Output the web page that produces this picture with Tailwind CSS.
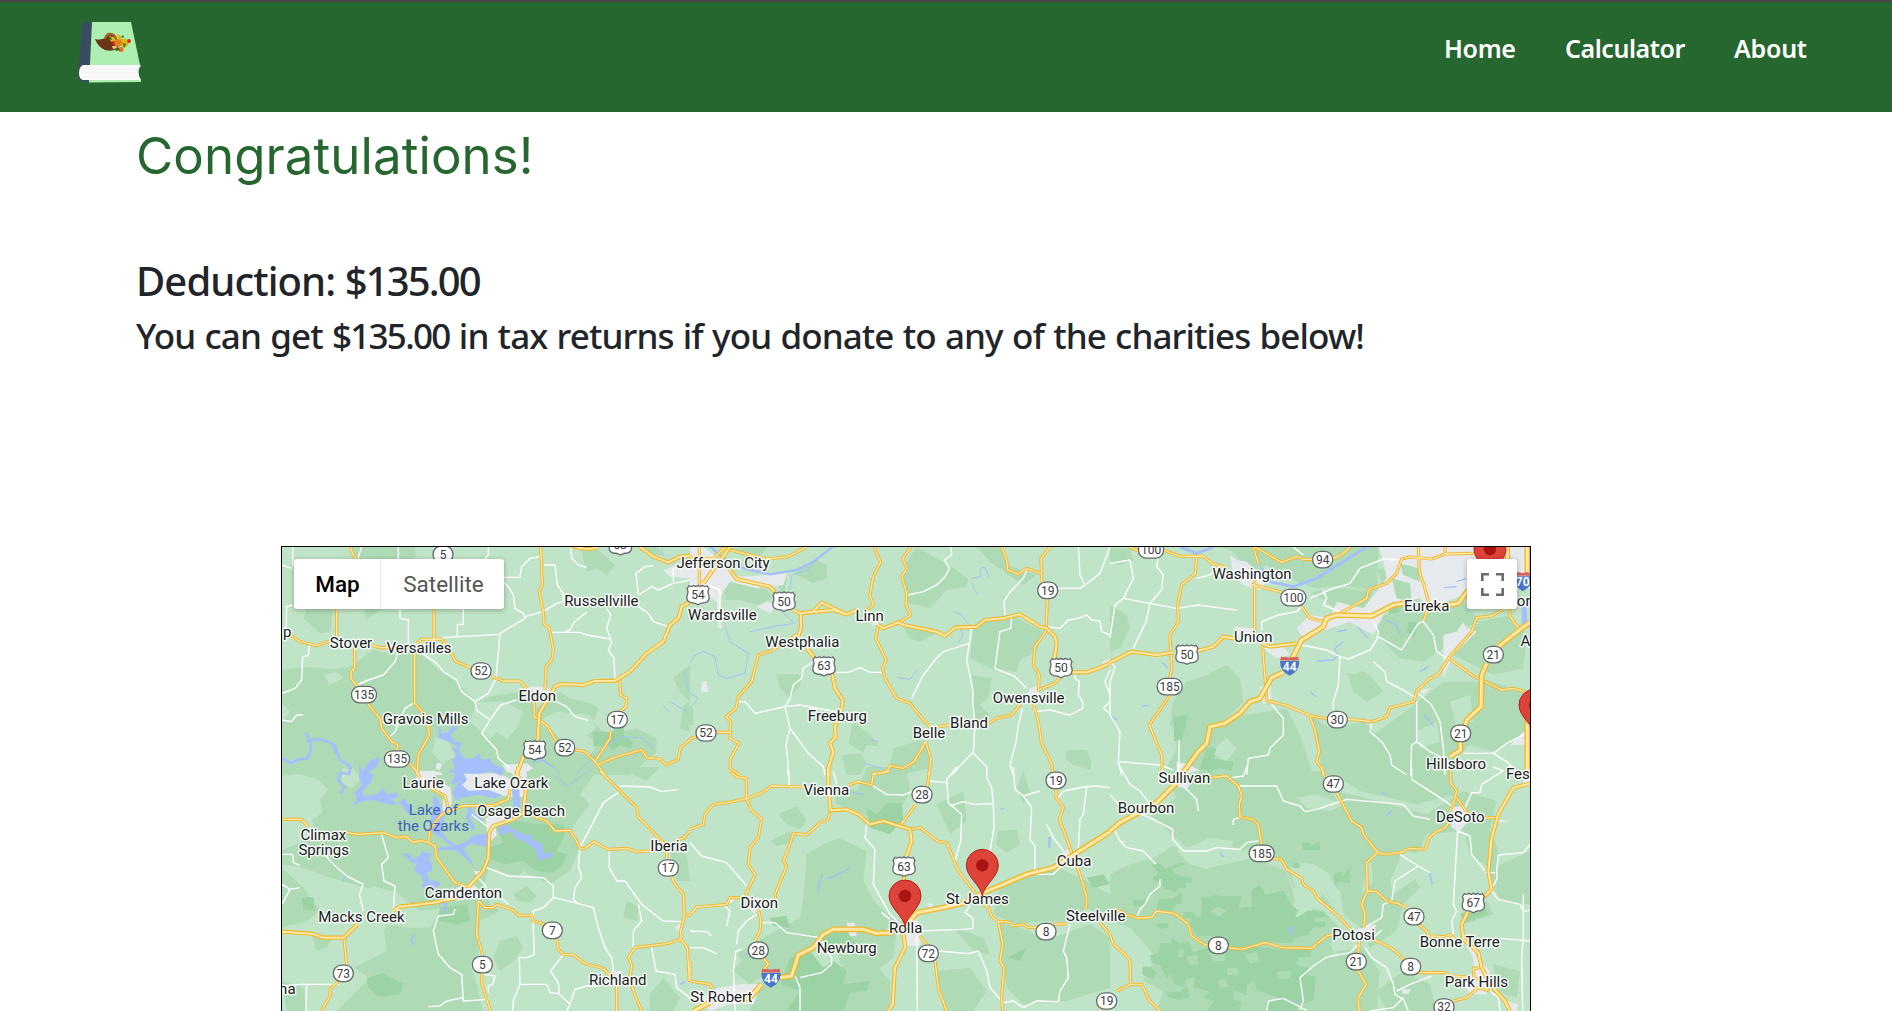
<!DOCTYPE html>
<html lang="en">
<head>
<meta charset="utf-8">
<title>Deduction results</title>
<script src="https://cdn.jsdelivr.net/npm/@tailwindcss/browser@4"></script>
</head>
<body class="h-[1011px] overflow-hidden bg-white font-['Noto_Sans',sans-serif] text-[#212529]">
<header class="flex h-[112px] items-start justify-between border-t-2 border-[#4a4349] bg-[#25672f] pl-[76px] pr-[84px]">
  <svg class="mt-[18px] h-[65px] w-[67px]" viewBox="76 20 67 65">
    <path d="M86 22h6l-2 44v14l-2 2h-5q-5-1-5-9l2-21 2-25q1-5 4-5z" fill="#3a4c64"/>
    <path d="M92 22h39l9 43H90z" fill="#adefb0"/><path d="M89 80h52v2l-52 .5z" fill="#adefb0"/>
    <path d="M83 65h58q-5 7 0 15H83q-4-1-4-7t4-8z" fill="#fbfbfd"/>
    <path d="M82 69h56M81 73h57M82 77h57" stroke="#e9ebee" stroke-width=".7"/>
    <path d="M95 39q7 2 12-3 4-3 8 0l4 7-2 6q-6 3-12 1-7-3-10-11z" fill="#6c3518"/>
    <path d="M105 39q1-6 7-5 5 2 4 8" fill="none" stroke="#a4632c" stroke-width="2"/>
    <path d="M109 36l5 1 2 4-5 1zM117 34l3 1 2 4 5 0 2 5-4 4-3-1-4-6z" fill="#dfb817"/>
    <circle cx="118" cy="43" r="3.800" fill="#e87a24"/><circle cx="121" cy="49.500" r="2.500" fill="#ef6c24"/><circle cx="129" cy="41" r="1.900" fill="#d92323"/><circle cx="113" cy="43" r="1.500" fill="#c9251d"/>
    <path d="M114 48l4-1 2 3-4 1zM108 38l3-1 1 3zM121 37l2-2 1 3zM123 43l3 1-2 4z" fill="#2d6b26"/><path d="M112 46l4 0 1 2-4 1z" fill="#f0c77a"/>
  </svg>
  <nav class="flex pt-[29px] text-[25px] leading-[34px] font-semibold text-white">
    <a class="w-[121px] -ml-px tracking-[-0.35px]">Home</a><a class="w-[169px] tracking-[-0.45px]">Calculator</a><a class="w-[74px] tracking-[-0.25px]">About</a>
  </nav>
</header>
<main class="pl-[136px]">
  <h1 class="h-[144px] pt-[14px] font-['Inter'] text-[51px] leading-[60px] font-normal tracking-[0.08px] text-[#25672f]">Congratulations!</h1>
  <h2 class="h-[58px] text-[40px] leading-[50px] font-medium tracking-[-0.9px] whitespace-nowrap">Deduction: <span class="tracking-[-1.9px]">$135.00</span></h2>
  <h3 class="h-[232px] text-[35px] leading-[44px] font-medium tracking-[-0.9px] [word-spacing:1px] whitespace-nowrap">You can get <span class="tracking-[-1.7px]">$135.00</span> in tax returns if you donate to any of the charities below!</h3>
  <section class="relative ml-[145px] h-[470px] w-[1250px] border border-black bg-[#c0e4c7]">
    <svg class="block h-[464px] w-[1248px]" viewBox="282 547 1248 464">
      <defs>
        <g id="minor">
          <g transform="translate(270 535) scale(.333333)"><path d="M240 36L250 60 262 75M200 220V310M60 300L90 320 140 332 180 318M305 328L325 338H380M440 325L455 313 515 312 545 355 555 378 605 400M665 425L700 438H750L770 460M492 220V312M434 350V505L470 545 478 600 445 660 442 720M254 335V400L243 410V430L262 455 300 515 330 550 335 580 365 620 383 630 380 650M415 680L445 715M812 36L817 150 808 170 820 230 822 268 838 280 850 345 845 375 828 395 825 465M793 500V545L830 570 860 620 915 645 945 650 975 680 1020 610 1022 590M975 680L1005 720M985 688L1040 665 1115 645 1130 668 1170 672 1190 690 1225 672 1230 640 1260 615M1048 430L1052 480 1070 490 1068 515 1050 530"/></g>
          <g transform="translate(690 535) scale(.333333)"><path d="M28 36V150M0 66L70 72 100 40 230 72 295 65 350 36M552 36L572 80 548 130 540 180 550 210 530 225M663 36L638 70 650 100 636 125 650 175 648 210 662 240 640 255 625 262M565 270L557 310 588 375 578 400 585 430 620 490 660 505 705 560 720 575M745 575L780 570M895 567L920 550 965 540 990 508M935 36L950 75 953 105 985 118 1010 100 1055 117M1080 36L1053 70 1056 145M1072 190L1068 290 1035 335 1030 390 1048 420 1045 465 1095 445 1112 425M1028 500L1045 560 1055 625 1087 690V720M320 300L250 345 205 360 185 440 145 485 138 520 108 545 122 560 120 610 147 625 122 670 120 700 150 720M0 612L20 605M75 592H120M707 620L690 650 672 680 640 700 600 692 590 712 548 716M707 620L722 670 718 720"/></g>
          <g transform="translate(1110 535) scale(.333333)"><path d="M60 36L90 50M160 45L210 64 280 63 305 85 350 98M260 63L256 115 215 150 203 210 205 260 180 300 185 400 180 430M180 480L118 570 155 660 157 720M435 36L515 82 560 65 580 73 610 73M665 73L700 55 720 36M430 36L445 85M434 130V320M425 148L515 172M575 215L600 250 650 262M690 235L770 190 775 165 830 145 860 115 875 72 900 66 965 72 1005 57 1095 55M1005 57V36M925 36L928 110 942 150 958 210 940 258M457 330L470 490M465 495L530 512 600 542 655 552M600 545L615 585 628 650 620 680 638 705V720M712 552L785 560 830 545 840 518 912 500 920 468 960 430 985 418 1015 370 1085 290 1100 248 1145 243 1180 222M1015 370L1085 420 1175 465 1210 460 1260 475M1200 220V245L1228 282M1228 282L1260 270"/></g>
          <g transform="translate(270 771) scale(.333333)"><path d="M430 -12L450 20M480 50L525 75 535 110M36 145H95L115 168M230 185L265 190 340 185 380 200 410 197 430 215 450 208 475 215 495 225 500 260 555 335 595 348M475 215L480 175 515 130 575 105 670 103 715 85 720 55M790 135L830 150 855 180 900 178 920 210 930 232 945 233 970 212 1015 235 1070 232 1100 242 1140 240M1225 205L1240 202 1260 180M990 0L1045 55 1100 110 1105 138 1165 200 1190 225V262M1205 318L1215 340 1240 370 1243 435 1232 480 1233 505 1190 518 1095 530 1075 560 1085 580 1080 620 1090 660 1115 720M1243 435L1260 432M1233 505L1252 530 1258 630M625 390L620 490 638 550M635 608V640L662 720M625 390L645 410H670L680 400 730 418 745 433H785L790 450 825 460M860 500L865 535 880 550 910 552 950 580 1000 592 1025 620M1040 645V720M222 500L230 580M205 630L180 655V675L155 720"/></g>
          <g transform="translate(690 771) scale(.333333)"><path d="M120 0L140 18 168 22 170 85 185 118 215 145 205 200 180 230 175 280 195 310 168 370 172 385M0 175L40 160 45 130 70 100 110 95 170 83 215 65 245 45 345 48M475 42L505 32 545 42 550 10 598 0M420 120L415 145 390 155 350 192 310 187 300 220 280 270 290 285 255 370 258 385M0 432L20 408 110 400 120 380H150M205 415L213 450 210 480 195 510M220 560L235 580 220 595M718 0L712 48M678 100L632 162M660 175L690 170 745 212 770 215 805 300 855 365M880 400L895 410 905 435 925 452 955 452 970 465 1000 460 1015 470 1045 468M1090 460L1130 458M1090 0V10M1098 55V80L1120 110 1108 145 1140 230 1150 260 1170 310 1190 380 1188 415M925 452L938 520 930 570 942 590 935 680 938 720M690 495L715 525M735 570L745 650 770 720M1230 455L1260 490M1220 710L1260 690M0 570V630L60 640 70 655"/></g>
          <g transform="translate(1110 771) scale(.333333)"><path d="M638 -12V5L645 18M680 65L725 150 755 170 760 190 800 240 805 243 770 275 772 360 755 400 765 430 762 470M805 243L820 250 870 245 900 232 945 235 957 200 975 185 1005 170 1020 150M772 360L800 362 830 390 865 398 890 410M925 460L950 480 955 495 1005 497 1020 490 1040 510M300 20L350 15 385 45 395 75 388 100 390 138 430 145 445 160 455 220M490 262L515 266 530 295 575 322 580 340 610 360 620 380 690 440 720 475M20 415L50 432 90 442 125 438 140 420 195 428 235 460 245 495 285 522 300 522M355 530L395 535 465 515 520 530 605 532 650 495 675 490M748 510L745 550M742 595L768 640 745 680 747 720M790 505L850 535 885 570M925 605H1005L1020 615 1080 618M0 490L10 520 45 550 60 570 62 640 20 660M60 640L95 640 120 690 150 720M1022 -12V35L1040 60 1030 100 1020 120M1040 80L1075 130M1125 140H1163M1030 690L1070 680 1105 650 1140 660M1115 590L1090 592 1092 620 1115 630"/></g>
        </g>
        <g id="major">
          <g transform="translate(270 535) scale(.333333)"><path d="M740 720L760 665 800 640M803 620L808 535 855 455 875 447 940 450 975 438 1035 437 1080 410 1130 355 1180 320 1200 270 1225 250 1235 215 1262 200M900 30Q950 50 985 36M1110 36L1150 65 1195 82 1230 65 1262 62"/></g>
          <g transform="translate(690 535) scale(.333333)"><path d="M120 36L40 145M120 105L140 132 240 155 255 172M310 225L330 235 370 230 395 203 470 238 500 225M330 235L430 225 470 238M332 235L333 275 325 305M350 340L375 370M425 410L435 460 458 495 455 520 435 575 437 605 420 625 430 650 415 700V720M565 270L580 280 625 262 640 270 740 290 765 303 795 278 860 275 885 255 940 250 990 238 1050 275 1070 280 1095 305 1100 330 1093 370M1145 412H1190L1220 402 1260 385"/></g>
          <g transform="translate(1110 535) scale(.333333)"><path d="M0 382L65 350 140 360 190 352M260 348L310 335 340 305 380 312M455 325L480 335 560 325"/></g>
          <g transform="translate(270 771) scale(.333333)"><path d="M36 482L125 488 160 500 222 500 262 460M370 420L390 407 490 395 560 380M595 348L640 300 655 260 658 185 670 165 730 145 760 125 768 50M768 50L740 10 745 -12"/></g>
          <g transform="translate(690 771) scale(.333333)"><path d="M415 -12V50L422 118 470 115 505 130 540 160 580 150 660 175 665 210 650 255M642 310V335M640 480L645 530 615 590 608 700 595 720"/></g>
          <g transform="translate(1110 771) scale(.333333)"><path d="M1260 38L1210 50 1165 130 1145 200 1135 300 1145 355 1120 380M1075 420L1055 460 1060 505 1105 545 1115 590 1140 640 1185 690 1200 720"/></g>
        </g>
        <g id="inter">
          <g transform="translate(1110 535) scale(.333333)"><path d="M1075 165L1045 205 1020 210 985 210M885 205L850 210 785 243 680 240 650 250 640 275 575 315 545 375M520 412L485 428 450 490 420 500 390 535 345 565 300 575 290 625 265 650 225 705 195 745M1260 262L1228 285 1165 335M1130 385L1115 420 1113 515 1070 555 1065 575M1050 615L1052 645 1020 665M1252 470V720M1252 36V120M1192 36V75"/></g>
          <g transform="translate(690 771) scale(.333333)"><path d="M1260 182L1145 255 1090 290 1040 302 1010 310 940 340 880 365 825 395 750 412 680 425 655 455 600 485 560 487 520 475 430 475 400 490 370 530 325 552 305 615 270 620M215 640L180 680 150 690M60 695L10 720"/></g>
          <g transform="translate(1110 771) scale(.333333)"><path d="M0 180L30 155 140 95 200 35"/></g>
        </g>
      </defs>
      <!-- woodland -->
      <g fill="#aedbb5">
        <g transform="translate(270 535) scale(.333333)"><path d="M36 405Q100 390 180 402L240 395 310 345 380 360 440 350 480 380 500 400 560 440 620 500 660 485 780 465 800 520 870 470 900 490 960 505 985 520 970 560 1010 600 1100 580 1160 610 1160 650 1080 720H36zM240 36H430L440 60 400 95 330 80H250zM110 220H190L180 290 150 295 100 250zM280 220L335 222 290 255zM935 50L985 45 1035 90 1010 120 980 100 950 110zM1210 430L1260 390V500L1230 470zM1240 510L1260 500V590L1230 580zM1130 0L1180 60 1140 60 1110 40z"/></g>
        <g transform="translate(690 535) scale(.333333)"><path d="M380 75L410 90 412 130 370 145 310 115zM100 150L140 130 230 165 250 190 200 210 150 195H105zM680 36L760 80 835 130 830 155 770 165 720 220 655 205 640 140 650 80zM860 36H935L950 90 1040 120 1000 150 900 80zM880 250L960 240 1060 290 1040 350 990 375 980 410 900 400 840 370 850 280zM258 418L340 418 330 450 300 490 270 460zM845 420L905 430 895 490 870 510 900 540 860 570 850 540zM490 560L540 600 570 635 530 630 520 655 475 625zM455 660L510 655 530 680 510 720H470zM610 640L690 615 720 640 720 700 650 715 600 690zM1130 645L1190 645 1205 680 1200 705 1150 690 1125 670zM640 275L740 295 690 320 660 310zM120 40L235 36 200 70 150 60zM260 145L290 135 280 180zM0 520H10V570H0z"/></g>
        <g transform="translate(1110 535) scale(.333333)"><path d="M330 36H805L800 170 700 150 620 160 560 140 470 90 420 120 370 50zM600 170L700 160 790 170 760 230 690 230 650 200zM190 500L230 440 290 420 350 390 390 430 400 500 340 560 290 600 230 640 180 570zM0 210L50 240 60 280 30 340 0 350zM280 600L400 540 470 530 530 520 570 600 610 720H160L200 640 190 560zM600 540L660 580 760 560 800 600 830 720H640zM640 180L700 170 700 215zM700 380L780 420 820 470 770 500 730 470zM800 100L900 120 930 180 1000 210 1060 200 1110 260 1050 280 1000 340 940 380 870 370 800 300 790 240 850 240zM900 520L1000 440 1100 440 1240 470 1250 600 1150 650 1080 630 1000 700 920 720H800L790 600zM1110 260L1200 240 1250 300 1240 400 1150 420 1030 360zM1115 430L1260 480V600L1120 560zM0 40H60L70 75 30 90 0 80z"/></g>
        <g transform="translate(270 771) scale(.333333)"><path d="M36 0H980L930 70 960 100 920 150 900 180 930 230 900 300 840 340 760 300 740 320 660 290 640 340 660 400 690 420 630 450 625 560 600 580 620 640 640 720H200L300 620 250 590 350 540 340 470 380 400 290 350 180 320 100 290 36 280zM36 290L100 350 150 420 110 450 36 470zM120 480L190 500 170 530 140 540zM730 370L770 345 800 375 780 395 740 390zM690 510L740 495 760 530 730 570 690 600 670 560zM1070 390L1110 410 1100 450 1060 440zM1140 670L1180 620 1230 680 1210 720H1140zM1200 240L1250 250 1260 330 1220 330zM36 630L100 650 110 720H50zM1080 -12H1170L1130 30 1090 10z"/></g>
        <g transform="translate(690 771) scale(.333333)"><path d="M265 130L320 105 350 150 330 175 290 160zM240 210L300 180 310 215 260 225zM530 -12H650L660 60 640 100 560 130 520 120 500 60zM430 50L530 60 560 150 500 120 440 100zM350 250L400 220 450 200 530 240 520 330 560 400 620 450 580 480 420 480 400 530 320 560 290 640 180 600 140 550 220 500 330 440 340 380zM740 100L820 60 830 150 780 190zM925 180L980 175 990 220 950 245 920 220zM930 350L1040 305 1110 290 1170 320 1260 370V440L1190 410 1130 450 1060 450 980 460 910 430zM920 450L1020 480 1130 600 1130 690 1000 700 950 650zM980 480L1090 500 1200 460 1260 500V650L1130 690 1050 640zM200 640L310 600 360 640 440 590 540 560 600 630 600 720H180zM160 560L210 540 240 600 180 640 130 600zM1000 0L1020 60 1000 100 980 50zM740 600L840 590 890 660 850 720H760zM790 470L880 500 900 550 850 540zM430 460L620 480 610 560 560 600 450 580z"/></g>
        <g transform="translate(1110 771) scale(.333333)"><path d="M160 0H640L680 90 760 160 800 240 770 290 740 440 660 410 600 360 550 350 530 290 480 240 430 230 400 240 330 210 230 230 120 130 200 80zM0 310L60 280 130 260 190 225 300 290 430 260 530 300 560 400 640 420 690 470 660 520 680 560 680 720H140L160 660 100 630 140 560 60 470 0 450zM680 60L800 90 950 130 1060 60 1160 90 1140 180 1170 250 1150 300 1080 250 1060 180 950 190 900 300 930 350 880 400 860 480 780 530 750 470 700 430 790 330 780 260zM680 540L760 530 810 600 800 720H680zM1050 430L1130 390 1150 430 1060 460zM1130 300L1260 240V400L1170 390zM800 660L880 600 960 640 980 720H830zM640 -12H1020L1040 70 920 100 750 60zM1150 580L1230 600 1220 680 1160 660z"/></g>
      </g>
      <!-- clearings -->
      <g fill="#c0e4c7">
        <g transform="translate(270 535) scale(.333333)"><path d="M620 500L700 500 760 530 740 580 710 612 680 590 660 612 600 560zM800 560L860 530 960 540 980 580 950 600 980 630 960 660 900 650 860 600zM160 420L200 410 220 430 180 450zM36 500L60 530 36 560z"/></g>
        <g transform="translate(1110 535) scale(.333333)"><path d="M300 650L350 610 380 640 350 680zM1020 500L1080 480 1090 560 1040 570zM920 590L980 560 990 620 930 640zM640 300L760 320 790 370 740 420 650 400 620 350z"/></g>
        <g transform="translate(282 700) scale(.333333)"><path d="M0 228L50 222 110 240 138 270 115 300 120 340 90 360 100 400 50 430 0 450zM180 205L218 208 235 240 210 265 180 250zM460 110L500 125 520 170 480 190 450 160z"/></g>
        <g transform="translate(270 771) scale(.333333)"><path d="M270 370L310 345 380 365 450 420 530 410 480 460 420 470 350 460 310 560 270 560 250 480zM410 470L470 430 500 440 480 470z"/></g>
        <g transform="translate(1110 771) scale(.333333)"><path d="M200 240L260 220 300 200 370 210 360 240 330 270 290 295 240 280zM560 80L620 70 700 100 660 120 590 110zM540 290L570 275 610 280 660 310 670 340 690 360 700 430 660 400 640 370 610 400 600 440 560 445 545 420 560 370zM880 240L950 250 920 320 850 370 840 330zM1060 600L1080 580 1090 620z"/></g>
      </g>
      <!-- national forest -->
      <g fill="#9bd3a5">
        <g transform="translate(270 535) scale(.333333)"><path d="M970 590H1030V560H1065L1060 600 1090 620 1080 640 1050 630 1030 645 1010 630 970 635z"/></g>
        <g transform="translate(270 771) scale(.333333)"><path d="M680 170L740 150 800 160 880 160 885 190 860 240 890 250 880 280 850 305 800 300 760 270 700 280 650 260 660 230 700 215zM510 410L590 400 600 450 560 460 500 450zM95 380L130 378 135 420 100 415zM290 620L340 605 400 640 390 670 330 678 295 650z"/></g>
        <g transform="translate(690 771) scale(.333333)"><path d="M530 110L560 130 590 95H635L640 145 600 190 540 170zM400 480L470 480 500 520 440 540 390 520zM240 440L290 435 300 470 250 465zM300 560L360 540 400 590 430 570 470 600 460 640 540 630 530 660 480 665 460 720H290L330 660 270 640zM950 560L1010 530 990 570zM1190 320L1240 310 1260 340 1210 350z"/></g>
        <g transform="translate(1110 535) scale(.333333)"><path d="M192 545L235 540 215 618H192zM290 640H320L310 670 370 680 365 708 330 700 300 710 270 700zM840 150L880 160 905 150 905 200 850 190 870 230 835 240 845 190zM895 260H925L915 310 890 290z"/></g>
        <g transform="translate(1110 771) scale(.333333)"><path d="M575 215H600V225L630 210V238H580zM672 310L700 300 690 325 720 290V335L690 330 675 340zM550 277L568 275V290H550zM1050 430L1120 395 1135 430 1065 455z"/></g>
        <g transform="translate(1110 840) scale(.333333)">
          <path d="M126 75L150 70 165 85 210 68 230 72 185 88 195 102 245 115 248 125 228 130V145H205L195 160 180 150 160 148 155 130 125 118 145 100zM70 180H110V198H70zM145 178L190 175 215 155V190L195 195 190 212 140 210zM275 175L320 165 340 168H395L385 205 425 200V150L445 135 460 148 465 165 520 152 530 168 545 195 565 210 555 235 595 212 640 215 650 230 615 235V245H645V260L610 262 595 285 560 290 545 310 460 305 430 315 390 325 350 320 350 290 290 288 262 290 240 255 245 235H220V215H245L262 235 275 225zM140 250H175V262L155 268 140 260z"/>
          <path d="M120 345L145 340 150 310H185V290L210 312 235 305 250 335 285 325 355 325 390 330 440 320 530 330 575 325 605 330 600 350 565 352 560 375 600 385 590 405 618 410 612 480 570 495 555 513H465L470 480 510 475 440 450 430 420 410 440V465L370 450 372 480 395 485 390 513H290L310 485 280 470 300 455 250 440 255 410 225 420V440L195 435 180 400 170 415 150 375 125 368zM98 380H125L140 400 130 418 98 405zM170 455H210L230 440 240 470 205 480 172 470z"/>
          <path fill="#aedbb5" d="M300 215L325 200 350 212 330 230zM300 340L345 338V362L310 365zM405 345L440 335 450 362 420 372zM350 385H385V405H352zM230 350L262 345 265 372 240 375zM500 395L545 392 540 415 505 418zM325 420L350 415 352 440 328 445zM205 330L220 328V352H205z"/>
          <path d="M550 70H568V84H550zM672 105L690 98 695 120 720 85V130L690 125 675 135z"/>
        </g>
      </g>
      <!-- built-up areas -->
      <g fill="#e7eaed">
        <g transform="translate(270 535) scale(.333333)"><path d="M1180 105L1220 90 1260 75V130L1200 125zM775 455H830L850 470 800 480zM700 690L770 685 790 700 760 715 710 712zM445 710H510L520 720H440zM500 685H515L510 705 498 700z"/></g>
        <g transform="translate(690 535) scale(.333333)"><path d="M0 36H40L70 60 110 105 150 125 240 120 290 115 280 150 200 160 120 140 100 170 90 190 95 280H85L80 200 0 150zM35 440L50 438 55 470 33 470zM200 215L230 200 260 210 240 235zM1020 460L1050 450 1045 480 1010 480zM1235 380L1260 372V395L1240 392zM545 270H565V240H540z"/></g>
        <g transform="translate(1110 535) scale(.333333)"><path d="M806 36H1260V160L1140 170 1100 110 1060 180 950 220 930 190 850 210 820 240 790 300 720 260 630 290 580 310 560 280 600 240 660 250 680 200 760 220 800 170 830 130 820 80zM360 60L380 75 410 80 470 140 450 165 400 150 370 120zM370 275L430 280 440 310 400 330zM460 340L520 335 540 360 500 370zM1000 300L1040 290 1060 260 1070 280 1100 290 1030 360 1000 430 1000 340zM930 465L960 460 940 480zM450 455L480 450 485 490 460 510zM200 680L240 690 270 708 200 720zM1240 590L1260 600V630L1200 630z"/><path d="M845 130L900 145 905 200 860 190zM870 85L925 100 930 140 880 120z" fill="#aedbb5"/></g>
        <g transform="translate(282 700) scale(.333333)"><path d="M410 212H460V238L505 262 510 300 500 340 480 340 485 290 450 265 400 240zM462 195L480 192 475 208H462zM545 222L650 218 690 240 690 290 650 285 600 270 560 275 535 255zM660 195L720 192 735 225 725 290 690 290 700 230zM610 355L650 340 700 350 640 380 645 405 625 425 615 395z"/></g>
        <g transform="translate(270 771) scale(.333333)"><path d="M560 350L610 340 640 370 600 380 560 390 520 370zM610 300H635L625 320zM1215 470L1235 455 1235 490zM1025 600H1060L1040 615z"/></g>
        <g transform="translate(690 771) scale(.333333)"><path d="M640 440L680 445 695 480 690 525 650 525 635 490zM470 455H495L500 495 480 495zM85 650L150 640 215 640 190 700 120 700 60 720 20 690zM1120 240L1140 235 1150 260 1110 270zM710 395L730 400 720 412zM165 380L205 378 220 400 190 430z"/></g>
        <g transform="translate(1110 771) scale(.333333)"><path d="M200 20L240 40 230 55 200 45zM1020 110L1055 105 1085 140 1050 180 1025 170zM875 655H903L895 670 878 668zM1060 510L1090 530 1100 560 1140 600 1130 670 1080 670 1060 640 1090 600 1090 560zM1165 145L1195 150 1170 155zM740 475L800 460 780 500 740 510zM1190 690L1225 700 1220 720H1195zM30 210H45L42 222zM1235 0L1260 20V45L1240 38z"/></g>
      </g>
      <!-- rivers and lake -->
      <g fill="none" stroke="#a4bffb" stroke-linejoin="miter">
        <g transform="translate(270 535) scale(.333333)"><path stroke-width="3" d="M800 670L830 680 870 715M920 715L1010 630 1060 605 1120 610 1150 640M1240 410L1250 450 1260 470M1180 510L1195 530M1200 500L1250 530M1175 40L1180 65"/></g>
        <g transform="translate(690 535) scale(.333333)"><path stroke-width="7" d="M55 30L95 65 160 100 240 118 320 105 370 80 435 30"/><path stroke-width="3" d="M370 80L355 105 305 120 300 165M270 225L315 265 250 275 180 290M105 275L120 320 175 355 165 415 110 430 85 420 75 365 40 350 15 360 0 385M0 475L25 490 0 520M790 233L810 235 838 270M805 325L818 300 810 280M620 428L660 433 683 405M845 145L862 178M845 130L870 125 872 100 885 97 898 128M520 685L580 700M540 615L565 620"/></g>
        <g transform="translate(1110 535) scale(.333333)"><path stroke-width="9" d="M210 36L260 55 310 36M455 100L480 140 550 155 620 130 700 80 770 36"/><path stroke-width="4" d="M155 382L175 400M600 470L618 485M620 378L670 375 682 362 675 340 700 320M680 290L710 285M740 275L775 310M825 255L860 270 868 298M930 410L955 395M945 540L970 575M1000 158L1040 155M1040 140L1070 130M95 513L115 512M0 540L20 555"/><path fill="#a4bffb" stroke="none" d="M1235 215L1250 210 1252 275 1235 270z"/></g>
        <g transform="translate(282 700) scale(.333333)">
          <path stroke-width="8" d="M0 174L28 190 48 178 75 176 85 155 88 128 70 98M75 125L100 118 125 120 148 130 162 150 175 182 205 198 202 222 175 218 168 240 188 262 175 280"/>
          <path fill="#a4bffb" stroke="none" d="M150 122L168 145 158 165zM232 185L240 215 265 180 295 172 285 200 260 215 275 225 265 250 240 275 250 290 290 280 300 262 315 282 345 278 350 290 325 300 345 310 370 295 375 310 395 320 380 345 355 310 330 315 290 305 270 300 235 305 212 318 225 290 215 280 240 255 232 235zM455 285L470 300 488 350 478 390 490 410 520 435 545 430 575 405 605 402 630 395 612 440 570 430 545 445 560 470 578 502 545 470 520 450 480 450 450 455 440 480 450 490 450 512 435 520 445 550 428 562 420 530 395 510 405 490 385 485 362 460 385 462 390 480 415 465 418 452 440 460 480 440 510 440 480 415 455 400 440 380 450 340zM470 75L480 100 500 95 510 78 530 82 505 105 520 125 540 128 530 150 545 175 575 175 590 160 600 180 625 175 630 190 665 205 660 228 625 215 590 222 545 220 555 240 540 255 560 272 620 270 660 285 640 295 590 285 550 290 520 300 510 275 530 245 505 255 520 220 498 215 520 205 510 180 525 165 510 145 525 140 500 125 470 115zM690 265L712 270 715 320 690 360 670 375 700 390 730 405 745 402 750 420 780 430 785 462 810 455V470L770 482 760 450 730 425 700 415 690 395 655 405 650 385 670 355 695 330zM430 545L460 540 475 555 440 570z"/>
          <path stroke-width="12" d="M600 365L575 345 555 340M570 345L560 320M555 345L575 390"/>
          <path stroke-width="4" d="M448 50L465 60M190 528L180 545M750 190L780 180 810 200"/>
        </g>
        <g transform="translate(270 771) scale(.333333)"><path stroke-width="8" d="M455 350L470 330M490 350L510 335M510 392L528 400 520 425"/><path stroke-width="5" d="M435 490L425 505 430 522M1230 640L1245 632"/><path stroke-width="3" d="M850 15L895 45 955 0"/></g>
        <g transform="translate(690 771) scale(.333333)"><path stroke-width="4" d="M397 310L383 360M410 325L440 312 478 292M485 65L520 70M930 115L943 112M160 553L180 548"/><path d="M1078 198V230" stroke-width="7"/></g>
        <g transform="translate(1110 771) scale(.333333)"><path stroke-width="5" d="M815 65L830 70M828 135L845 120M957 300L967 340M330 245L340 258M548 690L563 692M1190 0L1200 10"/><path stroke-width="8" d="M538 465L547 490"/></g>
      </g>
      <!-- local roads -->
      <g fill="none" stroke="#fff" stroke-width="4.2" stroke-linejoin="round">
        <g transform="translate(270 535) scale(.333333)"><path d="M36 90L65 100M68 36V95M262 75L275 36M385 36V75M390 220V250L415 255V325M580 220V268H562V305M515 308L690 298M655 36V60L648 68V75M700 127H750L755 95 780 70 810 65M690 295L765 250 760 235 735 220 730 180 715 155 700 140M765 245L820 230 860 205 880 200M822 90H855L862 150 880 175V200M845 292H930L950 300 1020 312M950 230L910 265 900 285 885 290M1010 220L1022 240 1010 280 1025 320 1015 345 1032 370 1035 437M690 295L678 430 655 475 615 500M450 350L500 385 520 410 560 435 575 470 615 500 620 525 660 555 692 510 740 495M660 555L635 595 680 645 685 670 720 700M860 500L890 515 915 545 955 556M385 350L375 380 340 420 295 435 260 450M118 330L115 362 98 365 95 435 75 460 36 475M36 555L65 560 80 540 100 540M430 505L405 520 375 590 355 610M68 210L50 215 48 290M902 36L905 70 925 90 950 97M1105 180L1098 115 1125 95 1150 92M1105 180L1145 155 1165 165 1210 145 1260 135M1105 215L1135 235 1150 260 1195 275M1210 140V100"/></g>
        <g transform="translate(690 535) scale(.333333)"><path d="M0 148L55 150 90 165V220M783 36L785 60 763 75 778 100 765 125 740 150 700 170 655 180M1010 105L1000 130 960 170 942 200 945 240M965 245L962 280 930 290 915 400 975 425 1010 460M845 275L838 325 760 350 735 375 700 420 665 490M838 325L830 375 850 470 848 500 855 570 850 650 785 720M850 655L890 695V720M437 412H475L510 398 540 412H580M370 380L340 400 335 430 310 450 300 490 285 515 195 535 165 500H140M285 515L330 510 410 525 440 530M285 515L300 580 288 630 295 690 293 720M300 580L355 655 400 695 405 720M998 520L985 570 978 620 960 690 970 720M1030 530L1080 525 1140 540 1178 520V500L1165 480 1168 440 1155 430V415M1070 275L1110 280 1135 255 1165 250 1190 240 1205 255 1230 258 1235 290 1260 300M1105 160H1170L1185 150 1170 120 1165 36M1185 150L1230 115 1260 36M1260 405L1245 440 1260 480M1260 500L1240 520 1260 535"/></g>
        <g transform="translate(1110 535) scale(.333333)"><path d="M145 65L140 95 160 120 155 165 120 205 108 260 70 340M0 85L60 75 70 130 40 190 15 210 0 310M40 190L120 205 200 220 265 210 340 220 380 225M260 130L300 120 330 95M575 215L560 230 505 240 455 260V285M550 36L580 60M600 190L670 160 720 145 750 100 820 72 875 75M640 165L650 190 640 210 690 230M575 330L650 345 690 365 715 372 780 345 800 315 805 290 790 260M805 305L875 345 925 265 940 260 970 300 980 350 1010 370M690 365L685 450 670 500V525M790 380L825 410 830 440 880 465 920 490M925 475L965 510 990 560 1000 640 1005 720M920 500V620L905 630 902 720M920 620L960 650 1020 680M785 565L780 590 815 620 840 660 845 690 890 720M485 508L520 550V600L480 640 475 660 415 670 410 720M205 720L208 615M0 380L15 395 0 440 0 540 30 590 25 680 150 690 190 705M25 680L35 720M1060 655L1150 655 1190 625 1250 595M1150 655L1190 680 1230 720"/></g>
        <g transform="translate(270 771) scale(.333333)"><path d="M1225 55L1175 62 1140 48 1050 45M1045 65L1000 95 930 230 925 285 935 320 915 350 910 385 925 400M605 130L650 165M335 190L355 260 335 280 342 330 375 345 370 415M155 240L190 280 230 315 280 340 268 370 280 420M36 250H68L70 275 90 283M36 340L60 355 36 400M60 355L90 350M650 290L715 315 820 320 850 345V380L915 395 970 410 985 470 1005 530 1025 560 1030 600M850 380L820 410 788 420 793 550 770 560H748L750 640 730 690 728 720M750 640H830L840 665 868 668M555 415L550 430 505 435 490 480 505 550 540 590 575 610 580 690 655 685M640 610L675 615 668 640 655 645V665M580 680L530 690 510 705 475 707M1018 238V290L1040 330H1065L1115 400 1180 450 1235 452M1105 400L1115 450 1090 480V530M1145 530L1158 600 1215 610 1220 650 1260 680M36 645L90 640H205M110 640L108 720M880 550L842 600 865 635 868 670 900 700 915 655 950 645 990 645M900 700L890 720M680 370L715 400M625 320L650 350"/></g>
        <g transform="translate(690 771) scale(.333333)"><path d="M297 0L298 45M0 215L35 255 110 275 170 345M130 385L105 405 120 420 110 465M215 455H255L290 485 390 500 425 560V580L395 605 330 620M140 520L145 480 170 450 200 430M155 535L138 540 130 600 135 720M0 480L50 482 65 495M0 530L40 530 80 548M315 615L330 650V720M530 160L525 200 555 235 550 340 600 430 620 450M575 425L600 445M685 480L820 475 850 472 848 440 825 425 840 405M680 490L682 720M720 30L770 35M800 -12L770 25 775 95 815 130 812 210 795 270M780 105L820 92 850 100 910 98 912 170 900 240M890 -12V20L905 50 910 98M970 -12L975 55 1000 75 1025 110 1020 205 1035 225V310H1090L1120 280M1000 75L1050 60M1260 50L1220 45 1180 48 1120 60 1105 80M1190 50L1180 130 1170 145 1165 230M1070 160L1090 200 1120 240M745 540L835 548 865 540 890 600 900 650 940 695 970 690 1000 710 1040 690 1105 692 1110 660 1135 620 1130 560 1120 540 1140 460M545 42L590 70 640 72 670 60M430 0L440 40"/></g>
        <g transform="translate(1110 771) scale(.333333)"><path d="M30 -12L60 40 90 60 120 100M0 70L25 100 130 145 188 175V205L220 240 290 240 320 230 390 235 410 215 445 210M225 50L260 85 265 120M10 170L30 210 50 230 100 240 138 280M150 325V345L120 370 105 400 90 415 82 435M385 45L500 45 520 90 570 105 585 122 620 115 710 85 880 100 910 135 960 145M365 20L400 15 410 -12M388 140L370 145V162M905 -12V25L990 80 1025 105M1150 -12L1180 0 1155 15 1115 40 1110 65 1085 65 1065 110M1260 220L1240 245 1165 252 1160 300 1162 320 1150 345M1125 305H1155M1145 360L1165 385 1230 400 1240 420 1260 418M1240 370V500L1235 560 1238 720M1170 502L1260 510M1043 175L1030 400 1040 420 1025 450 1030 490M1043 180L1080 195 1085 250 1125 300M870 250L925 285 960 305M925 285L855 330 845 390 820 400 815 440 765 470M790 500L815 478M745 520L720 545 650 558 610 585 570 620 580 690 570 715M470 720L475 690 520 682 590 718M765 530L785 560 830 590 850 640 855 670 880 685 895 720M860 660L900 640 965 615M880 680L850 710 780 720M1140 660L1165 680 1170 720"/></g>
      </g>
      <g fill="none" stroke-linejoin="round">
        <use href="#minor" stroke="#f0b62d" stroke-width="9.500"/><use href="#minor" stroke="#ffeab0" stroke-width="3.800"/>
        <use href="#major" stroke="#f0b62d" stroke-width="12.500"/><use href="#major" stroke="#ffe9a6" stroke-width="6"/>
        <use href="#inter" stroke="#f0b62d" stroke-width="17"/><use href="#inter" stroke="#ffe9a6" stroke-width="9"/>
      </g>
      <g id="marks" font-family="Roboto, sans-serif" text-anchor="middle"></g>
    </svg>
    <div class="absolute top-[12px] left-[12px] flex h-[50px] w-[210px] rounded-[3px] bg-white font-['Roboto'] text-[22.5px] leading-[50px] shadow-[0_1px_5px_rgba(0,0,0,0.3)]">
      <div class="w-[87px] border-r border-[#e6e6e6] pl-px text-center font-medium text-black">Map</div>
      <div class="flex-1 pl-[2px] text-center text-[#565656]">Satellite</div>
    </div>
    <div class="absolute top-[12px] right-[13px] flex h-[50px] w-[50px] items-center justify-center rounded-[3px] bg-white shadow-[0_1px_5px_rgba(0,0,0,0.3)]">
      <svg class="h-[23px] w-[23px]" viewBox="0 0 23 23"><path d="M1.300 8V1.300H8M15 1.300h6.700V8M21.700 15v6.700H15M8 21.700H1.300V15" fill="none" stroke="#6b6b6b" stroke-width="2.600"/></svg>
    </div>
  </section>
</main>
<script>
const origin = [[270,535],[690,535],[1110,535],[270,771],[690,771],[1110,771]];
// [sheet, text, centre x, baseline]
const towns = [
[0,'p',52,305],[0,'Stover',243,338],[0,'Versailles',447,355],[0,'Gravois Mills',467,568],[0,'Eldon',802,499],[0,'Russellville',994,214],
[0,'Jefferson City',1359,100],[1,'Wardsville',97,254],[1,'Linn',539,259],[1,'Westphalia',337,336],[1,'Freeburg',442,558],[1,'Belle',717,608],[1,'Bland',837,579],[1,'Owensville',1016,503],
[2,'Washington',426,133],[2,'Union',430,320],[2,'Eureka',950,229],[2,'Hillsboro',1038,702],[2,'or',1241,213],[2,'A',1246,332],
[3,'Laurie',459,51],[3,'Lake Ozark',724,52],[3,'Osage Beach',753,134],[3,'Climax',160,206],[3,'Springs',161,251],[3,'Camdenton',580,382],[3,'Macks Creek',274,452],[3,'Iberia',1197,239],[3,'Richland',1043,642],[3,'na',52,668],
[4,'Vienna',409,72],[4,'Dixon',208,410],[4,'Rolla',647,485],[4,'St James',862,400],[4,'Cuba',1152,286],[4,'Newburg',470,545],[4,'St Robert',94,692],[4,'Steelville',1217,451],
[5,'Sullivan',223,35],[5,'Bourbon',108,126],[5,'DeSoto',1051,153],[5,'Potosi',731,506],[5,'Bonne Terre',1049,528],[5,'Park Hills',1099,648],[5,'Festus',1255,25]];
// [sheet, kind, number, centre x, centre y]
const routes = [
[0,'s','5',519,58],[0,'s','52',633,408],[0,'s','135',282,479],[0,'s','135',381,672],[0,'s','17',1042,554],[0,'s','52',884,638],[0,'u','54',794,645],[0,'u','63',1051,30],
[1,'u','54',24,179],[1,'u','50',282,199],[1,'u','63',402,393],[1,'u','50',1113,398],[1,'s','19',1073,166],[1,'s','52',48,594],
[2,'s','100',123,45],[2,'s','94',638,74],[2,'s','100',550,188],[2,'u','50',231,358],[2,'s','185',179,455],[2,'i','44',539,393],[2,'s','30',682,554],[2,'s','21',1150,359],[2,'s','21',1052,595],[2,'i','70',1238,139],
[3,'s','7',847,478],[3,'s','5',637,581],[3,'s','73',220,607],[3,'s','17',1195,291],
[4,'s','28',696,71],[4,'s','19',1098,28],[4,'u','63',642,286],[4,'s','8',1068,482],[4,'s','72',715,547],[4,'s','28',205,538],[4,'i','44',243,621],[4,'s','19',1250,690],
[5,'s','47',670,39],[5,'s','185',455,247],[5,'s','8',325,523],[5,'s','47',912,437],[5,'u','67',1090,395],[5,'s','21',739,572],[5,'s','8',902,587],[5,'s','32',1002,708]];
const pins = [[4,645,375],[4,877,283],[2,1140,42],[2,1275,510]];
const at = (s,x,y) => `transform="translate(${origin[s][0]+x/3} ${origin[s][1]+y/3})"`;
let out = '';
for (const [s,k,n,x,y] of routes) {
  out += `<g ${at(s,x,y)}>`;
  if (k==='s') { const w = n.length>2 ? 25 : 20; out += `<rect x="${-w/2}" y="-8.2" width="${w}" height="16.4" rx="8" fill="#fff" stroke="#656a6e" stroke-width="1.3"/>`; }
  if (k==='u') out += '<path d="M-9-9Q-7-7.500-4.500-9.300 -2-7.500 0-9.500 2-7.500 4.500-9.300 7-7.500 9-9L11-6Q9-3 11 1 12 7 7 8 3 8 0 10 -3 8-7 8-12 7-11 1-9-3-11-6z" fill="#fff" stroke="#656a6e" stroke-width="1.3"/>';
  if (k==='i') out += '<path d="M-8.500-9.500Q-6-8-4-9.300 0-7.500 4-9.300 6-8 8.500-9.500L9.500-5.500H-9.500z" fill="#d8605f"/><path d="M-9.600-5H9.600Q10 5 0 9.800-10 5-9.600-5z" fill="#4a76cc"/>';
  out += `<text y="${k==='i'?4.7:4.3}" font-size="12" ${k==='i'?'font-weight="700" fill="#fff"':'fill="#3c4043"'}>${n}</text></g>`;
}
for (const [s,t,x,y] of towns) out += `<text ${at(s,x,y)} font-size="15" fill="#202124" stroke="#fff" stroke-width="3" stroke-linejoin="round" stroke-opacity=".85" paint-order="stroke">${t}</text>`;
out += `<g fill="#3f62bd" font-size="15"><text ${at(3,490,132)}>Lake of</text><text ${at(3,490,180)}>the Ozarks</text></g>`;
for (const [s,x,y] of pins) out += `<g ${at(s,x,y)}><path d="M0 31C-1 20-16 12-16 0A16 16 0 0 1 16 0C16 12 1 20 0 31z" fill="#dd4338" stroke="#b5221c"/><circle r="6.200" fill="#a61414"/></g>`;
document.getElementById('marks').innerHTML = out;
</script>
</body>
</html>
